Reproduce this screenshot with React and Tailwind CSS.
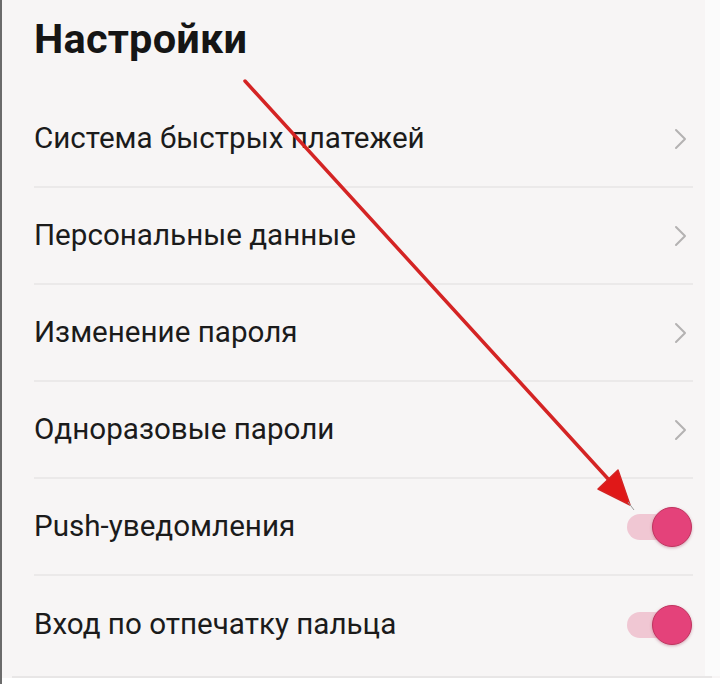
import React from "react";

function Chevron() {
  return (
    <svg width="16" height="24" viewBox="0 0 16 24" className="shrink-0">
      <path d="M3 3 L12 12 L3 21" fill="none" stroke="#b4b2b2" strokeWidth="2" strokeLinecap="round" strokeLinejoin="round" />
    </svg>
  );
}

function Toggle() {
  return (
    <div className="relative w-[66px] h-[42px] flex items-center">
      <div className="ml-[1px] w-[40px] h-[26px] rounded-full bg-[#f0c7d3]" />
      <div className="absolute right-0 top-[1px] w-[40px] h-[40px] rounded-full bg-[#e4427a] border-[1.5px] border-[#c0345f] shadow-[0_1px_3px_rgba(150,30,70,0.35)]" />
    </div>
  );
}

const rows = [
  { t: "Система быстрых платежей", k: "c" },
  { t: "Персональные данные", k: "c" },
  { t: "Изменение пароля", k: "c" },
  { t: "Одноразовые пароли", k: "c" },
  { t: "Push-уведомления", k: "t" },
  { t: "Вход по отпечатку пальца", k: "t" },
];

export default function App() {
  return (
    <div
      className="relative w-[720px] h-[684px] overflow-hidden bg-[#f7f5f5] border-l-2 border-[#6b6b6b] flex flex-col"
      style={{ fontFamily: "Roboto, 'Noto Sans', sans-serif" }}
    >
      <div className="flex flex-1">
        <div className="w-[691px] flex flex-col pl-[32px]">
          <div className="h-[91px] pt-[18px]">
            <h1 className="text-[41.5px] leading-[42px] font-bold text-[#151515] tracking-[0.2px]">Настройки</h1>
          </div>
          {rows.map((r, i) => (
            <div key={i} className={i === rows.length - 1 ? "flex-1 flex flex-col" : "h-[97px] flex flex-col"}>
              <div className={i === rows.length - 1 ? "h-[97px] flex items-center justify-between" : "flex-1 flex items-center justify-between"}>
                <span className="text-[29.6px] text-[#1b1b1b]">{r.t}</span>
                {r.k === "c" ? (
                  <div className="mr-[4px]"><Chevron /></div>
                ) : (
                  <div className="mr-[1px]"><Toggle /></div>
                )}
              </div>
              {i < rows.length - 1 && <div className="h-[2px] bg-[#ebe9e9]" />}
            </div>
          ))}
        </div>
        <div className="flex-1" />
        <div className="w-[15px] bg-[#fbfbfb]" />
      </div>
      <div className="h-[2px] bg-[#e8e6e6] ml-[10px] mr-[8px]" />
      <div className="h-[6px] bg-white" />
      <svg className="absolute left-0 top-0 pointer-events-none" width="720" height="684" viewBox="0 0 720 684">
        <line x1="243" y1="81" x2="608" y2="481" stroke="#d42424" strokeWidth="3.5" strokeLinecap="round" />
        <polygon points="628,505 596,489 616,470" fill="#e01818" stroke="#d42424" strokeWidth="1.5" strokeLinejoin="round" />
        <line x1="626" y1="502" x2="632" y2="510" stroke="#9a9a9a" strokeWidth="1" />
      </svg>
    </div>
  );
}
